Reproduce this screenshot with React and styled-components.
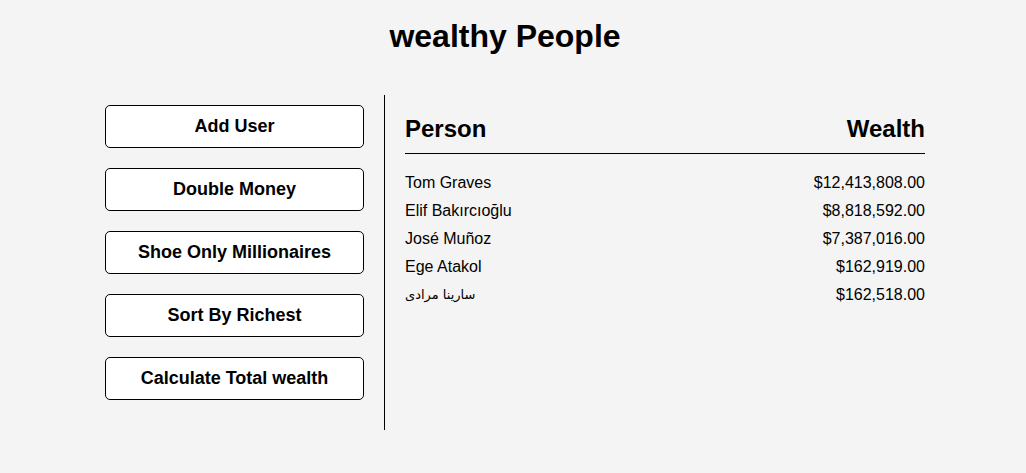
import React from "react";
import styled, { createGlobalStyle } from "styled-components";

const GlobalStyle = createGlobalStyle`
  body {
    margin: 0;
    background-color: #f4f4f4;
    font-family: "Liberation Sans", Arial, sans-serif;
    color: #000;
  }
`;

const Title = styled.h1`
  margin: 18px 0 40px;
  padding-right: 16px;
  text-align: center;
  font-size: 32px;
  font-weight: bold;
  line-height: 37px;
`;

const Layout = styled.div`
  display: flex;
  padding: 0 101px 0 105px;
`;

const Sidebar = styled.aside`
  display: flex;
  flex-direction: column;
  gap: 20px;
  width: 259px;
  padding: 10px 20px 30px 0;
  border-right: 1px solid #000;
`;

const Button = styled.button`
  height: 43px;
  background-color: #fff;
  border: 1px solid #000;
  border-radius: 5px;
  font-family: "Liberation Sans", Arial, sans-serif;
  font-size: 18px;
  font-weight: bold;
  color: #000;
  cursor: pointer;
`;

const Main = styled.main`
  flex: 1;
  padding: 20px 0 0 20px;
`;

const Header = styled.div`
  display: flex;
  justify-content: space-between;
  align-items: flex-end;
  height: 28px;
  padding-bottom: 10px;
  border-bottom: 1px solid #000;
  font-size: 24px;
  font-weight: bold;
`;

const List = styled.ul`
  list-style: none;
  margin: 15px 0 0;
  padding: 0;
`;

const Row = styled.li`
  display: flex;
  justify-content: space-between;
  height: 28px;
  line-height: 28px;
  font-size: 16px;
`;

const Name = styled.span`
  font-family: ${(props) =>
    props.rtl ? '"DejaVu Sans", "Noto Sans", sans-serif' : '"Liberation Sans", Arial, sans-serif'};
  font-size: ${(props) => (props.rtl ? "13px" : "16px")};
`;

const people = [
  { name: "Tom Graves", money: 12413808 },
  { name: "Elif Bakırcıoğlu", money: 8818592 },
  { name: "José Muñoz", money: 7387016 },
  { name: "Ege Atakol", money: 162919 },
  { name: "سارینا مرادی", money: 162518, rtl: true },
];

const formatMoney = (n) =>
  "$" + n.toFixed(2).replace(/\d(?=(\d{3})+\.)/g, "$&,");

const actions = [
  "Add User",
  "Double Money",
  "Shoe Only Millionaires",
  "Sort By Richest",
  "Calculate Total wealth",
];

const App = () => (
  <>
    <GlobalStyle />
    <Title>wealthy People</Title>
    <Layout>
      <Sidebar>
        {actions.map((label) => (
          <Button key={label}>{label}</Button>
        ))}
      </Sidebar>
      <Main>
        <Header>
          <span>Person</span>
          <span>Wealth</span>
        </Header>
        <List>
          {people.map((p) => (
            <Row key={p.name}>
              <Name rtl={p.rtl}>{p.name}</Name>
              <span>{formatMoney(p.money)}</span>
            </Row>
          ))}
        </List>
      </Main>
    </Layout>
  </>
);

export default App;
